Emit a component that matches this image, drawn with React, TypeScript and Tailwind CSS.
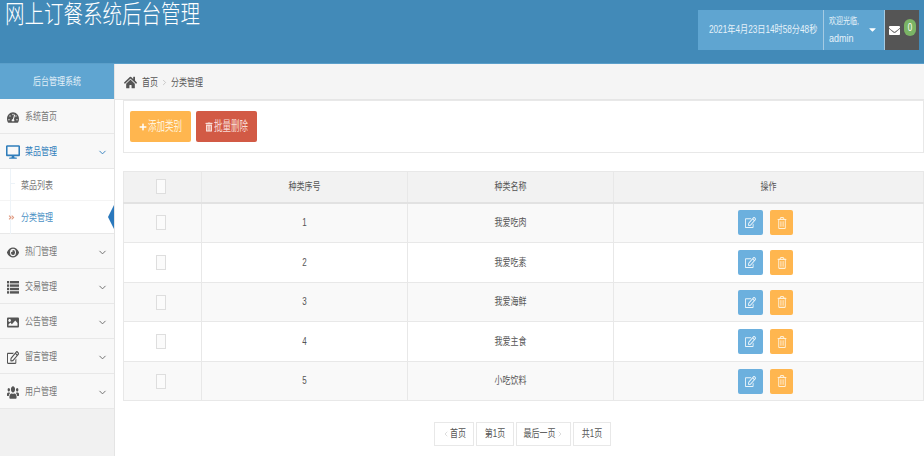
import type { ReactNode } from "react"
import { ChevronDown, ChevronRight, ChevronLeft } from "lucide-react"
import {
  FaTachometerAlt,
  FaDesktop,
  FaEye,
  FaImage,
  FaRegEdit,
  FaUsers,
  FaHome,
  FaEnvelope,
  FaPlus,
  FaTrashAlt,
  FaRegTrashAlt,
  FaCaretDown,
  FaAngleDoubleRight,
} from "react-icons/fa"

const cjk = "font-['Liberation_Sans','Noto_Sans_CJK_SC',sans-serif]"

// the screenshot was squeezed sideways, so the glyphs are narrow and tall
function T({ children }: { children: ReactNode }) {
  return <span className="inline-block scale-y-[1.3]">{children}</span>
}

function ListIcon() {
  return (
    <svg width="12" height="13" viewBox="0 0 12 13" fill="currentColor">
      {[0, 3.4, 6.8, 10.2].map((y) => (
        <g key={y}>
          <rect x="0" y={y} width="2.2" height="2.4" />
          <rect x="3" y={y} width="9" height="2.4" />
        </g>
      ))}
    </svg>
  )
}

const menuAfter = [
  { label: "热门管理", icon: <FaEye size={13} className="scale-y-[1.25]" /> },
  { label: "交易管理", icon: <ListIcon /> },
  { label: "公告管理", icon: <FaImage size={13} className="scale-y-[1.1]" /> },
  { label: "留言管理", icon: <FaRegEdit size={13} className="scale-y-[1.2]" /> },
  { label: "用户管理", icon: <FaUsers size={13} className="scale-y-[1.5]" /> },
]

const rows = [
  { id: 1, name: "我爱吃肉", h: "h-[40px]" },
  { id: 2, name: "我爱吃素", h: "h-[40px]" },
  { id: 3, name: "我爱海鲜", h: "h-[39px]" },
  { id: 4, name: "我爱主食", h: "h-[40px]" },
  { id: 5, name: "小吃饮料", h: "h-[39px]" },
]

function Check() {
  return <div className="ml-[32px] h-[15px] w-[10px] border border-[#dedede] bg-[#fbfbfb]" />
}

function Header() {
  return (
    <header className="flex h-[64px] shrink-0 items-start justify-between border-b border-[#5b9fca] bg-[#428ab8]">
      <h1 className="ml-[5px] mt-[1px] origin-top-left scale-y-[1.3] text-[19.5px] leading-[20px] font-light text-white">
        网上订餐系统后台管理
      </h1>
      <div className="mr-[5px] mt-[10px] flex h-[40px] w-[221px] text-white">
        <div className="flex w-[125px] items-center whitespace-nowrap bg-[#5fa5d1] pl-[11px] text-[8.2px] text-[#e6f2f9]">
          <T>2021年4月23日14时58分48秒</T>
        </div>
        <div className="relative w-[61px] border-l border-[#a5cbe3] bg-[#5fa5d1] pl-[5px] text-[#e6f2f9]">
          <div className="mt-[5px] text-[7px] leading-[12px]">
            <T>欢迎光临,</T>
          </div>
          <div className="mt-[5px] text-[9px] leading-[12px]">
            <T>admin</T>
          </div>
          <FaCaretDown size={11} className="absolute right-[6px] top-[14px] text-white" />
        </div>
        <div className="relative flex-1 border-l border-[#a5cbe3] bg-[#555555]">
          <FaEnvelope size={11} className="absolute left-[4px] top-[15px] scale-y-[1.1] text-white" />
          <span className="absolute left-[19px] top-[9px] flex h-[17px] w-[12px] items-center justify-center rounded-full bg-[#7ab465] text-[8px] text-white">
            <T>0</T>
          </span>
        </div>
      </div>
    </header>
  )
}

function Sidebar() {
  return (
    <aside className="flex w-[115px] shrink-0 flex-col border-r border-[#e4e4e4] bg-[#f1f1f1] text-[8px] text-[#777777]">
      <div className="flex h-[35px] items-center justify-center bg-[#5fa5d1] text-[#e3f0f8]">
        <T>后台管理系统</T>
      </div>
      <div className="flex h-[35px] items-center border-b border-[#e8e8e8] bg-[#f8f8f8] pl-[7px] pt-[2px]">
        <span className="flex w-[12px] justify-center text-[#555555]">
          <FaTachometerAlt size={13} className="scale-y-[1.1]" />
        </span>
        <span className="ml-[6px]">
          <T>系统首页</T>
        </span>
      </div>
      <div className="flex h-[35px] items-center border-b border-[#e8e8e8] bg-[#f8f8f8] pl-[6px] pt-[2px] text-[#2f7dbb]">
        <FaDesktop size={14} className="scale-y-[1.1]" />
        <span className="ml-[5px]">
          <T>菜品管理</T>
        </span>
        <ChevronDown size={11} strokeWidth={2} className="ml-auto mr-[6px]" />
      </div>
      <div className="relative">
        <div className="absolute bottom-0 left-[10px] top-0 w-px bg-[#edf3f8]" />
        <div className="absolute left-[10px] top-[14px] h-px w-[5px] bg-[#edf3f8]" />
        <div className="flex h-[32px] items-center border-b border-[#f4f4f4] bg-white pl-[21px] pt-[2px]">
          <T>菜品列表</T>
        </div>
        <div className="flex h-[33px] items-center border-b border-[#e8e8e8] bg-white pl-[21px] pt-[2px] text-[#4a90c4]">
          <T>分类管理</T>
        </div>
        <FaAngleDoubleRight size={7} className="absolute left-[8px] top-[45px] text-[#e09a80]" />
        <div className="absolute right-0 top-[36px] h-0 w-0 border-y-[12px] border-r-[6px] border-y-transparent border-r-[#2a78bc]" />
      </div>
      {menuAfter.map((item) => (
        <div key={item.label} className="flex h-[35px] items-center border-b border-[#e8e8e8] bg-[#f8f8f8] pl-[7px] pt-[2px]">
          <span className="flex w-[12px] justify-center text-[#555555]">{item.icon}</span>
          <span className="ml-[6px]">
            <T>{item.label}</T>
          </span>
          <ChevronDown size={11} strokeWidth={2} className="ml-auto mr-[6px] text-[#666666]" />
        </div>
      ))}
    </aside>
  )
}

function Content() {
  const th = "border border-b-2 border-[#e8e8e8] border-b-[#e2e2e2] font-normal"
  const td = "border border-[#e8e8e8]"
  return (
    <main className="flex-1 bg-white text-[#555555]">
      <div className="flex h-[36px] items-center border-b border-[#e6e6e6] bg-[#f5f5f5] pl-[9px] pt-[2px] text-[8px]">
        <FaHome size={13} className="scale-y-[1.15] text-[#555555]" />
        <span className="ml-[5px]">
          <T>首页</T>
        </span>
        <ChevronRight size={9} className="mx-[2px] text-[#bbbbbb]" />
        <T>分类管理</T>
      </div>
      <div className="ml-[8px] flex h-[53px] items-center gap-[5px] border border-[#e8e8e8] pl-[6px] text-[8.5px] text-[#fff3dc]">
        <button className="flex h-[31px] w-[61px] items-center justify-center gap-[1px] rounded-[2px] bg-[#ffb64f]">
          <FaPlus size={8} className="text-white" />
          <span className="inline-block scale-y-[1.5]">添加类别</span>
        </button>
        <button className="flex h-[31px] w-[61px] items-center justify-center gap-[1px] rounded-[2px] bg-[#d25a45] text-[#f8dcd6]">
          <FaTrashAlt size={8} className="scale-y-[1.2]" />
          <span className="inline-block scale-y-[1.5]">批量删除</span>
        </button>
      </div>
      <table className="ml-[8px] mt-[18px] w-[801px] table-fixed border-collapse text-center text-[8px] text-[#555555]">
        <colgroup>
          <col className="w-[78px]" />
          <col className="w-[206px]" />
          <col className="w-[206px]" />
          <col />
        </colgroup>
        <thead>
          <tr className="h-[31px] bg-[#f2f2f2]">
            <th className={th}>
              <Check />
            </th>
            <th className={th}>
              <T>种类序号</T>
            </th>
            <th className={th}>
              <T>种类名称</T>
            </th>
            <th className={th}>
              <T>操作</T>
            </th>
          </tr>
        </thead>
        <tbody>
          {rows.map((row, i) => (
            <tr key={row.id} className={`${row.h} ${i % 2 === 0 ? "bg-[#f9f9f9]" : "bg-white"}`}>
              <td className={td}>
                <Check />
              </td>
              <td className={td}>
                <T>{row.id}</T>
              </td>
              <td className={td}>
                <T>{row.name}</T>
              </td>
              <td className={td}>
                <div className="flex items-center justify-center gap-[7px] pr-[6px]">
                  <button className="flex h-[25px] w-[25px] items-center justify-center rounded-[2px] bg-[#6cb0de] text-[#e8f3fa]">
                    <FaRegEdit size={11} className="scale-y-[1.15]" />
                  </button>
                  <button className="flex h-[25px] w-[23px] items-center justify-center rounded-[2px] bg-[#ffb64f] text-[#ffefd6]">
                    <FaRegTrashAlt size={10} className="scale-y-[1.2]" />
                  </button>
                </div>
              </td>
            </tr>
          ))}
        </tbody>
      </table>
      <div className="ml-[319px] mt-[21px] flex h-[24px] gap-[2px] text-[8px] text-[#555555]">
        <div className="flex w-[40px] items-center justify-center border border-[#e8e8e8]">
          <ChevronLeft size={8} className="text-[#cccccc]" />
          <T>首页</T>
        </div>
        <div className="flex w-[38px] items-center justify-center border border-[#e8e8e8]">
          <T>第1页</T>
        </div>
        <div className="flex w-[55px] items-center justify-center border border-[#e8e8e8]">
          <T>最后一页</T>
          <ChevronRight size={8} className="text-[#cccccc]" />
        </div>
        <div className="flex w-[38px] items-center justify-center border border-[#e8e8e8]">
          <T>共1页</T>
        </div>
      </div>
    </main>
  )
}

export default function App() {
  return (
    <div className={`flex h-[456px] w-[924px] flex-col overflow-hidden bg-white ${cjk}`}>
      <Header />
      <div className="flex flex-1">
        <Sidebar />
        <Content />
      </div>
    </div>
  )
}
